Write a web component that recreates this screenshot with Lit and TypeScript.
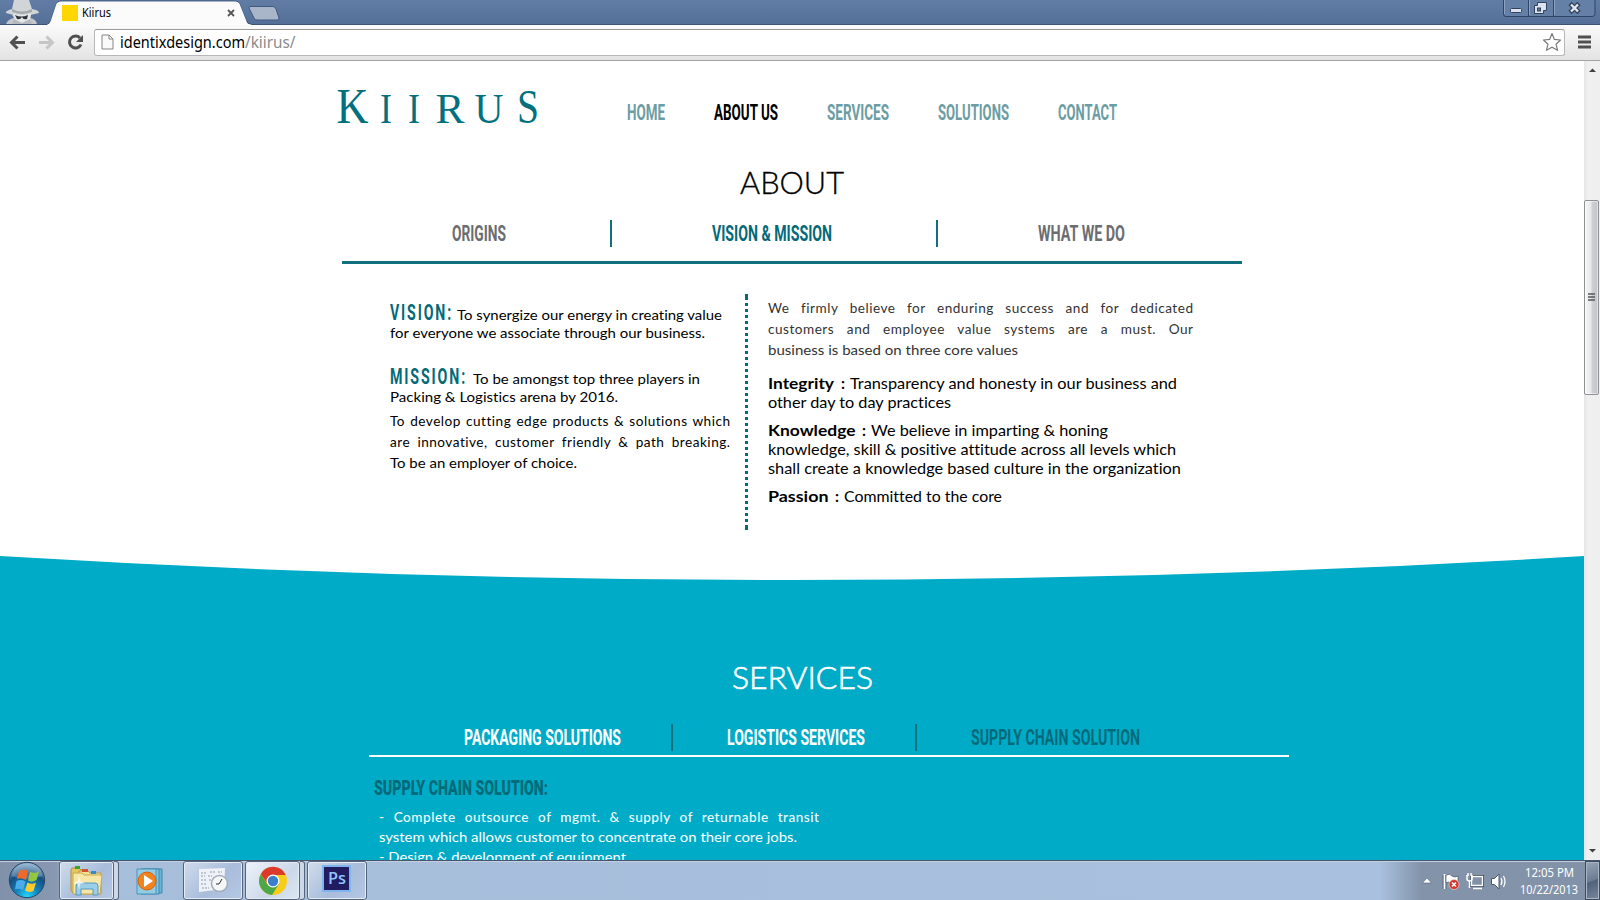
import { LitElement, html, svg, css } from "lit";
import { customElement } from "lit/decorators.js";

/** One line of text set to an exact measure. */
const fit = (text: string, w: number, size: number, base: number, h: number, cls = "") => html`
  <svg class="fit ${cls}" width=${w} height=${h}>
    <text x="0" y=${base} font-size=${size} textLength=${w} lengthAdjust="spacingAndGlyphs">${text}</text>
  </svg>`;

const head = (text: string, w: number, cls = "") => fit(text, w, 22.8, 21.3, 27, "cond " + cls);
const small = (text: string, w: number, base = 14.3, h = 18) => fit(text, w, 13.3, base, h);
const big = (text: string, w: number, cls = "") => fit(text, w, 15.3, 15.3, 19, cls);

@customElement("browser-bar")
class BrowserBar extends LitElement {
  static styles = css`
    :host { display: block; font-family: "Noto Sans", "Open Sans", sans-serif; }
    svg { display: block; overflow: visible; flex: none; }
    .title { height: 24px; display: flex; background: linear-gradient(#617da5, #546f98); }
    .spy { width: 47px; }
    .tab { width: 203px; height: 25px; display: grid; z-index: 1; }
    .tab > * { grid-area: 1 / 1; }
    .label { display: flex; padding: 5px 0 0 15px; gap: 4px; }
    .fav { width: 16px; height: 16px; background: #ffd600; flex: none; }
    .close { margin-left: 112px; }
    .win { margin-left: 1223px; }
    .bar { height: 36px; display: flex; align-items: center; border-bottom: 1px solid #a3a3a3; background: linear-gradient(#fbfbfb, #e3e3e3); }
    .omni { box-sizing: border-box; width: 1471px; height: 27px; margin: 0 13px 0 5px; display: flex; align-items: center; background: #fff; border: 1px solid #b8b8b8; border-top-color: #989898; border-radius: 3px; }
    .page { margin: 0 6px 0 6px; }
    .grey { fill: #8b8b8b; }
    .star { margin-left: auto; margin-right: 2px; }
  `;
  render() {
    return html`
      <div class="title">
        <svg class="spy" width="47" height="24">
          <path d="M6 24 Q8 19 14 18 L12 15 H31 L30 18 Q36 19 37 24Z" fill="#c4c8cc"/>
          <path d="M14 0 L12 9 Q5 11 6 13 Q21 18 39 13 Q39 10 32 9 L29 0Z" fill="#d2d5d8"/>
          <path d="M12 9 Q22 14 32 9 L32 12 Q22 16 12 12Z" fill="#a4a9ae"/>
          <path d="M13 13 Q22 17 31 13 L30 21 L22 24 L15 21Z" fill="#e4e6e8"/>
          <path d="M15 15 Q21 18 28 15 L27 19 Q23 20 22 17 Q20 20 17 19Z" fill="#30343a"/>
          <path d="M14 19 L22 23 L30 19 L32 24 H12Z" fill="#b4b9bf"/>
        </svg>
        <div class="tab">
          <svg width="203" height="25">
            <path d="M-47 24.5 H0 Q3 24 4 20 L9 5 Q10 1 14 1 H188 Q192 1 193 5 L199 20 Q200 24 205 24.5 H1553" fill="none" stroke="#3e5274"/>
            <path d="M0 25 Q3 24 4 20 L9 5 Q10 1.500 14 1.500 H188 Q192 1.500 193 5 L199 20 Q200 24 203 25Z" fill="#fbfbfb"/>
          </svg>
          <div class="label">
            <div class="fav"></div>
            ${fit("Kiirus", 29, 12, 12, 16)}
            <svg class="close" width="8" height="16"><path d="M1 5 L7 11 M7 5 L1 11" stroke="#555" stroke-width="1.800"/></svg>
          </div>
        </div>
        <svg width="30" height="24"><path d="M-0.500 6.500 H23 Q25 6.500 26 9 L29 18 Q29 20 27 20 H7 Q5 20 4 18 L-1 8Z" fill="#a9b6ca" stroke="#435a80"/></svg>
        <svg class="win" width="92" height="18">
          <path d="M0.500 -1 V14 Q0.500 16.500 3 16.500 H89 Q92 16.500 92 14 V-1" fill="#6580a7" stroke="#2f4568"/>
          <path d="M25.500 0 V16 M50.500 0 V16" stroke="#2f4568"/>
          <path d="M1.500 0 V14 M26.500 0 V15 M51.500 0 V15" stroke="#8ca2c2"/>
          <rect x="7.500" y="8.500" width="11" height="4" rx="1" fill="#dce3ee" stroke="#33425c"/>
          <path d="M34.500 2.500 H43.500 V10.500 H40.500 V13.500 H31.500 V5.500 H34.500Z" fill="#dce3ee" stroke="#33425c"/>
          <rect x="34.500" y="8" width="3" height="3" fill="#5f7898" stroke="#33425c"/>
          <path d="M67 3.500 L76 12.500 M76 3.500 L67 12.500" stroke="#33425c" stroke-width="4.600"/>
          <path d="M68 4.500 L75 11.500 M75 4.500 L68 11.500" stroke="#e3e8f0" stroke-width="2.400"/>
        </svg>
      </div>
      <div class="bar">
        <svg width="89" height="36">
          <path d="M25 18.500 H12 M17.500 12.500 L11.500 18.500 L17.500 24.500" fill="none" stroke="#505050" stroke-width="3"/>
          <path d="M39 18.500 H52 M46.500 12.500 L52.500 18.500 L46.500 24.500" fill="none" stroke="#c6c6c6" stroke-width="3"/>
          <path d="M80 14 A6 6 0 1 0 81 20.500" fill="none" stroke="#505050" stroke-width="3"/>
          <path d="M83 11 V18 H76Z" fill="#505050"/>
        </svg>
        <div class="omni">
          <svg class="page" width="13" height="16"><path d="M1 1 H8 L12 5 V15 H1Z M8 1 V5 H12" fill="#fafafa" stroke="#858585"/></svg>
          ${fit("identixdesign.com", 125, 16, 18, 25)}
          ${fit("/kiirus/", 50.5, 16, 18, 25, "grey")}
          <svg class="star" width="20" height="20"><path d="M10 1.500 L12.400 7.400 L18.500 8 L14 12.200 L15.600 18.300 L10 15.200 L4.400 18.300 L6 12.200 L1.500 8 L7.600 7.400Z" fill="#fff" stroke="#7a7a7a" stroke-width="1.200" stroke-linejoin="round"/></svg>
        </div>
        <svg width="13" height="14"><path d="M0 2 H13 M0 7 H13 M0 12 H13" stroke="#505050" stroke-width="2.800"/></svg>
      </div>`;
  }
}

@customElement("site-page")
class SitePage extends LitElement {
  static styles = css`
    :host { display: flex; flex-direction: column; height: 799px; width: 1584px; overflow: hidden; background: #fff; font-family: Lato, "Open Sans", sans-serif; font-variant-ligatures: none; }
    svg { display: block; overflow: visible; flex: none; }
    .row { display: flex; }
    .about { height: 495px; flex: none; }
    .header { height: 99px; padding-left: 337px; }
    .logo { font-family: "Liberation Serif", serif; fill: #03707d; }
    .nav { display: flex; gap: 49px; margin: 38px 0 0 90px; fill: #6c9da4; }
    .cond { font-family: Roboto, sans-serif; font-weight: 700; }
    .on { fill: #000; }
    .title { margin-left: 740px; height: 50px; font-weight: 300; stroke: #000; stroke-width: 0.35px; }
    .tabs { margin: 10px 0 0 452px; height: 27px; fill: #6b6d70; }
    .teal { fill: #046a7a; }
    .div { width: 2px; background: #10707d; }
    .d1, .d2 { margin: 0 100px 0 104px; }
    .rule { width: 900px; height: 3px; margin: 14px 0 30px 342px; background: #10707d; }
    .cols { display: flex; padding-left: 390px; }
    .left { width: 355px; }
    .just { font-size: 13.600px; line-height: 21px; letter-spacing: 0.500px; text-align: justify; text-align-last: justify; white-space: nowrap; }
    .lj { width: 340.500px; }
    .gapTop { margin-top: 5px; }
    .dots { width: 3px; height: 236px; }
    .right { padding: 4px 0 0 20px; }
    .rj { width: 425.500px; color: #333; }
    .grey { fill: #333; }
    .val { margin-top: 9px; }
    .val.first { margin-top: 13px; }
    .b { font-weight: 700; }
    .colon { margin: 0 5px 0 6.500px; }
    .curve { height: 24px; }
    .services { flex: 1; background: #00abc8; fill: #fff; color: #f0fbfd; }
    .stitle { margin: 75px 0 29px 732px; height: 40px; font-weight: 300; stroke: #fff; stroke-width: 0.6px; }
    .stabs { margin-left: 464px; }
    .s1 { margin: 0 54px 0 50px; }
    .s2 { margin: 0 54px 0 50px; }
    .srule { width: 920px; height: 2px; margin: 4px 0 0 369px; background: #fff; }
    .sub { margin-left: 374px; height: 50px; }
    .heavy { font-weight: 900; fill: #046a7a; }
    .copy { margin-left: 379px; }
    .sj { width: 440.500px; line-height: 20px; font-weight: 500; }
  `;
  render() {
    const letter = (c: string, x: number, w: number, s: number) =>
      svg`<text x=${x} y="62" font-size=${s} textLength=${w} lengthAdjust="spacingAndGlyphs">${c}</text>`;
    const dots = Array.from({ length: 37 }, (_, i) => svg`<rect x="0" y=${9 + i * 6} width="3" height="3"/>`);
    return html`
      <section class="about">
        <div class="row header">
          <svg class="logo" width="200" height="99">
            ${letter("K", -0.5, 32, 50)}${letter("I", 43, 12, 42)}${letter("I", 71, 12, 42)}${letter("R", 98.5, 29, 42)}${letter("U", 137.5, 29, 42)}${letter("S", 180, 22, 48)}
          </svg>
          <nav class="nav">
            ${head("HOME", 38)}${head("ABOUT US", 64, "on")}${head("SERVICES", 62)}${head("SOLUTIONS", 71)}${head("CONTACT", 59)}
          </nav>
        </div>
        <div class="title">${fit("ABOUT", 104, 30.5, 34, 40)}</div>
        <div class="row tabs">
          ${head("ORIGINS", 54)}<div class="div d1"></div>${head("VISION & MISSION", 120, "teal")}<div class="div d2"></div>${head("WHAT WE DO", 87)}
        </div>
        <div class="rule"></div>
        <div class="cols">
          <div class="left">
            <div class="row">
              <svg class="cond teal" width="67" height="30"><text y="26.300" font-size="22.800" textLength="63" lengthAdjust="spacingAndGlyphs" letter-spacing="3">VISION:</text></svg>
              ${small("To synergize our energy in creating value", 265, 26.300, 30)}
            </div>
            ${small("for everyone we associate through our business.", 315)}
            <div class="row">
              <svg class="cond teal" width="83" height="46"><text y="42.300" font-size="22.800" textLength="77" lengthAdjust="spacingAndGlyphs" letter-spacing="3">MISSION:</text></svg>
              ${small("To be amongst top three players in", 227, 42.300, 46)}
            </div>
            ${small("Packing & Logistics arena by 2016.", 228)}
            <div class="gapTop"></div>
            <div class="just lj">To develop cutting edge products &amp; solutions which</div>
            <div class="just lj">are innovative, customer friendly &amp; path breaking.</div>
            ${small("To be an employer of choice.", 187, 15.300, 21)}
          </div>
          <svg class="dots" width="3" height="236" fill="#056a78"><rect width="3" height="6"/>${dots}<rect y="231" width="3" height="5"/></svg>
          <div class="right">
            <div class="just rj">We firmly believe for enduring success and for dedicated</div>
            <div class="just rj">customers and employee value systems are a must. Our</div>
            ${fit("business is based on three core values", 250, 13.3, 15.3, 21, "grey")}
            <div class="row val first">${big("Integrity", 66, "b")}${big(":", 4, "colon b")}${big("Transparency and honesty in our business and", 327)}</div>
            ${big("other day to day practices", 183)}
            <div class="row val">${big("Knowledge", 87.5, "b")}${big(":", 4, "colon b")}${big("We believe in imparting & honing", 237)}</div>
            ${big("knowledge, skill & positive attitude across all levels which", 408)}
            ${big("shall create a knowledge based culture in the organization", 413)}
            <div class="row val">${big("Passion", 60.5, "b")}${big(":", 4, "colon b")}${big("Committed to the core", 158)}</div>
          </div>
        </div>
      </section>
      <svg class="curve" width="1584" height="24"><path d="M0 0 Q792 48 1584 0 V25 H0Z" fill="#00abc8"/></svg>
      <section class="services">
        <div class="stitle">${fit("SERVICES", 141, 30.5, 34, 40)}</div>
        <div class="row stabs">
          ${head("PACKAGING SOLUTIONS", 157)}<div class="div s1"></div>${head("LOGISTICS SERVICES", 138)}<div class="div s2"></div>${head("SUPPLY CHAIN SOLUTION", 169, "teal")}
        </div>
        <div class="srule"></div>
        <div class="sub">${fit("SUPPLY CHAIN SOLUTION:", 174, 20, 38.3, 43, "cond heavy")}</div>
        <div class="copy">
          <div class="just sj">- Complete outsource of mgmt. &amp; supply of returnable transit</div>
          ${small("system which allows customer to concentrate on their core jobs.", 418, 15.2, 20)}
          ${small("- Design & development of equipment", 247, 15.2, 20)}
        </div>
      </section>`;
  }
}

@customElement("scroll-bar")
class ScrollBar extends LitElement {
  static styles = css`
    :host { box-sizing: border-box; width: 16px; height: 799px; display: flex; flex-direction: column; background: linear-gradient(90deg, #e6e6e6, #f0f0f0 4px, #efefef); }
    svg { display: block; flex: none; }
    .thumb { box-sizing: border-box; height: 195px; width: 15px; margin-top: 123px; display: grid; place-items: center; border: 1px solid #8f9094; border-radius: 2px; background: linear-gradient(90deg, #f6f6f6, #e9e9eb 45%, #cfd0d5 55%, #c2c3ca); box-shadow: inset 0 0 0 1px #fff8; }
    .down { margin-top: auto; }
  `;
  render() {
    return html`
      <svg width="16" height="16"><path d="M5 11 L8.500 7.500 L12 11Z" fill="#404040"/></svg>
      <div class="thumb"><svg width="8" height="9"><path d="M0 1 H7 M0 4 H7 M0 7 H7" stroke="#55565a" stroke-width="1.600"/></svg></div>
      <svg class="down" width="16" height="16"><path d="M5 5 L8.500 8.500 L12 5Z" fill="#404040"/></svg>`;
  }
}

@customElement("task-bar")
class TaskBar extends LitElement {
  static styles = css`
    :host { box-sizing: border-box; display: flex; height: 40px; border-top: 1px solid #46566e; box-shadow: inset 0 1px #c2d0e2; background: linear-gradient(90deg, #8091a9 0, #8798b0 56px, #a7bedb 70px, #a9c0de 1380px, #8293aa 1422px, #8192a9); font-family: "Noto Sans", "Open Sans", sans-serif; }
    svg { display: block; overflow: visible; flex: none; }
    .start { margin-left: 7px; }
    .btn { box-sizing: border-box; height: 39px; display: grid; place-items: center; flex: none; border: 1px solid #56657c; border-radius: 3px; box-shadow: inset 0 0 0 1px #e3ebf5; background: linear-gradient(135deg, #d0dceb, #a9bddb 55%, #b4c8e4); }
    .b1 { width: 55px; margin-left: 14px; }
    .b3 { width: 60px; margin-left: 16px; }
    .b4 { width: 55px; margin-left: 2px; }
    .b5 { width: 60px; margin-left: 2px; }
    .lit { background: linear-gradient(135deg, #eef3f9, #ccd8ea 60%, #dde7f3); }
    .stack { box-sizing: border-box; width: 5px; height: 39px; border: 1px solid #56657c; border-left: 0; border-radius: 0 3px 3px 0; background: #ccd8e8; }
    .media { margin: 7px 0 0 17px; }
    .ps { box-sizing: border-box; width: 29px; height: 27px; margin: 0 1px 5px 0; border: 2px solid #7fb5ed; background: #211b60; fill: #8fc4ff; display: grid; place-items: center; font-family: "Open Sans", sans-serif; font-weight: 600; }
    .tray { margin-left: auto; display: flex; }
    .clock { width: 60px; margin: 0 6px 0 13px; fill: #fff; padding-top: 3px; display: grid; justify-items: center; align-content: start; }
    .show { box-sizing: border-box; width: 15px; height: 39px; border: 1px solid #3e4b5f; box-shadow: inset 0 0 0 1px #a9b5c5; background: linear-gradient(160deg, #97a5b8, #6b7b92 50%, #50617a 52%, #76869d); }
  `;
  render() {
    return html`
      <svg class="start" width="38" height="39">
        <defs>
          <radialGradient id="orb" cx=".5" cy=".95" r=".9"><stop offset="0" stop-color="#25d5fa"/><stop offset=".35" stop-color="#1284bd"/><stop offset=".7" stop-color="#154e80"/><stop offset="1" stop-color="#7ba3c5"/></radialGradient>
        </defs>
        <circle cx="20" cy="19" r="17.700" fill="url(#orb)" stroke="#2c4868"/>
        <path d="M4.500 15 Q7.500 3 20 2.500 Q32.500 3 35.500 15 Q19 20 4.500 15Z" fill="#fff" opacity=".22"/>
        <path d="M12 10 Q17 7 21 10 L19 19 Q14 16 10 18Z" fill="#ee6a2c"/>
        <path d="M23 10.500 Q27 13 32 10.500 L29.500 19 Q25 22 21 19.500Z" fill="#93c641"/>
        <path d="M9.500 20 Q14 18 18.500 20.500 L16 29 Q12 27 8 28.500Z" fill="#4bacea"/>
        <path d="M20.500 21.500 Q25 24 29 21.500 L26.500 30 Q22 32 18 29.500Z" fill="#fcc92f"/>
      </svg>
      <div class="btn b1">
        <svg width="33" height="32">
          <path d="M1 5 Q1 3 3 3 H9 L11 5 H17 V28 H3 L1 25Z" fill="#e6c75f" stroke="#b3913b"/>
          <path d="M9 6 H18 L20 8 H31 V29 H8Z" fill="#f3df93" stroke="#bb9b47"/>
          <path d="M3 8 H12 L14 10 H32 L30 29 H3Z" fill="#f7e7a7" stroke="#c7a955"/>
          <rect x="5" y="1" width="5" height="3" fill="#35a52c"/><rect x="12" y="4" width="6" height="3" fill="#d35431"/><rect x="21" y="6" width="5" height="3" fill="#2e8cd5"/>
          <path d="M6 30 V21 Q6 18 9 18 H25 Q28 18 28 21 V30 H23 V24 H11 V30Z" fill="#9bcfe9" stroke="#5498bc"/>
          <path d="M9 10 L10 16 L15 18 L10 19 L9 25 L8 19 L3 18 L8 16Z" fill="#fff" opacity=".75"/>
        </svg>
      </div>
      <div class="stack"></div>
      <svg class="media" width="31" height="28">
        <path d="M8 1 H26 V25 H8Z" fill="#6cb4d6" stroke="#3b87af"/><path d="M5 1 H23 V26 H5Z" fill="#81c4e1" stroke="#3b87af"/><path d="M1 1 H20 V26 H1Z" fill="#93cce5" stroke="#4a93b8"/>
        <circle cx="11" cy="13" r="9" fill="#f2841f" stroke="#d2640c"/><path d="M8 7 L17 13 L8 19Z" fill="#fff"/>
      </svg>
      <div class="btn b3">
        <svg width="30" height="26">
          <path d="M1 1 L27 0 L26 21 L1 24Z" fill="#eef2f7"/>
          <path d="M3 5 H9 M12 4 H18 M3 8 H7 M10 8 H14 M3 12 H8 M11 12 H13 M3 16 H9 M4 20 H11 M20 4 H24" stroke="#8d9cae" stroke-dasharray="2 1"/>
          <circle cx="21.500" cy="15.500" r="8" fill="#f4f6f8" stroke="#a2acb8" stroke-width="1.500"/><path d="M21 16 L24 11 M21 16 H18" stroke="#333" fill="none"/>
        </svg>
      </div>
      <div class="btn b4 lit">
        <svg width="30" height="30" viewBox="-15 -15 30 30">
          <circle r="14" fill="#f8cc18"/>
          <path d="M0 0 L-12.120 -7 A14 14 0 0 1 12.800 -6 H0Z" fill="#db3a2c"/>
          <path d="M-12.120 -7 A14 14 0 0 0 -1 14 L6 3 L-6 3Z" fill="#4da746"/>
          <path d="M-12.120 -7 L-5.500 3 L0 -6Z" fill="#db3a2c"/>
          <circle r="6.500" fill="#fff"/><circle r="5.200" fill="#3b7fca"/>
        </svg>
      </div>
      <div class="stack"></div>
      <div class="btn b5"><div class="ps">${fit("Ps", 18, 15.5, 16.5, 22)}</div></div>
      <div class="tray">
        <svg width="82" height="39">
          <path d="M-1.500 22 L3 17 L7.500 22Z" fill="#fff" stroke="#56657a" stroke-width=".6"/>
          <path d="M20.500 14 V28" stroke="#3b4654" stroke-width="3.500"/><path d="M20.500 13 V28" stroke="#fff" stroke-width="2"/>
          <path d="M22 14 Q26 12 28 15 Q31 17 34 15 V22 Q30 24 27 22 Q24 20 22 22Z" fill="#fff" stroke="#4c5868" stroke-width=".7"/>
          <circle cx="30" cy="23.500" r="5" fill="#d6352d" stroke="#f3e8e8" stroke-width=".6"/><path d="M28 21.500 L32 25.500 M32 21.500 L28 25.500" stroke="#fff" stroke-width="1.600"/>
          <path d="M47.500 15.500 H58.500 V24.500 H47.500Z" fill="#74859c" stroke="#303c4e" stroke-width="3"/>
          <path d="M47.500 15.500 H58.500 V24.500 H47.500Z M49 27.500 H58" fill="#8192a8" stroke="#fff" stroke-width="1.400"/>
          <path d="M43 14 V18 Q43 20 45.500 20 Q48 20 48 18 V14 M45.500 20 V27 M44 12 V15 M47 12 V15" fill="none" stroke="#fff" stroke-width="1.500"/>
          <path d="M67.500 17.500 H70.500 L75 13 V28 L70.500 23.500 H67.500Z" fill="#fff" stroke="#4c5868"/>
          <path d="M77 17 Q79 20.500 77 24 M79.500 15 Q82.500 20.500 79.500 26" fill="none" stroke="#fff" stroke-width="1.200"/>
        </svg>
        <div class="clock">${fit("12:05 PM", 49, 12, 13, 17)}${fit("10/22/2013", 58, 12, 13, 17)}</div>
        <div class="show"></div>
      </div>`;
  }
}

for (const el of [BrowserBar, TaskBar]) {
  el.styles = [el.styles, css`.fit { display: block; overflow: visible; flex: none; }`] as any;
}

@customElement("app-root")
class AppRoot extends LitElement {
  static styles = css`
    :host { display: flex; flex-direction: column; width: 1600px; height: 900px; overflow: hidden; background: #fff; }
    .main { display: flex; height: 799px; flex: none; }
  `;
  render() {
    return html`
      <browser-bar></browser-bar>
      <div class="main"><site-page></site-page><scroll-bar></scroll-bar></div>
      <task-bar></task-bar>`;
  }
}
